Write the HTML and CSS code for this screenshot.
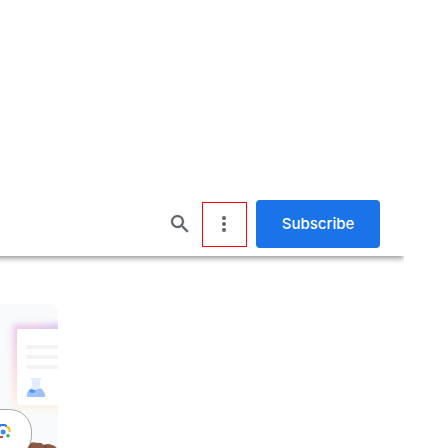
FILE: index.html
```html
<!DOCTYPE html>
<html lang="en">
<head>
<meta charset="utf-8">
<meta name="viewport" content="width=device-width, initial-scale=1">
<title>Subscribe</title>
<link rel="stylesheet" href="styles.css">
</head>
<body>
<header class="header">
  <nav class="actions">
    <button class="icon-button" type="button" aria-label="Search">
      <svg class="icon icon-search" viewBox="0 0 24 24"><path d="M15.5 14h-.79l-.28-.27A6.471 6.471 0 0 0 16 9.5 6.5 6.5 0 1 0 9.5 16c1.61 0 3.09-.59 4.23-1.57l.27.28v.79l5 4.99L20.49 19l-4.99-5zm-6 0C7.01 14 5 11.99 5 9.5S7.01 5 9.5 5 14 7.01 14 9.5 11.99 14 9.5 14z"/></svg>
    </button>
    <button class="icon-button icon-button-marked" type="button" aria-label="More">
      <svg class="icon" viewBox="0 0 24 24"><circle cx="12" cy="6" r="2"/><circle cx="12" cy="12" r="2"/><circle cx="12" cy="18" r="2"/></svg>
    </button>
    <button class="subscribe" type="button">Subscribe</button>
  </nav>
</header>
<main class="content">
  <svg class="hero" viewBox="0 0 58 144" aria-hidden="true">
    <defs>
      <linearGradient id="glow" x1="0" y1="0" x2="0" y2="1">
        <stop offset="0" stop-color="#ecc0ea"/>
        <stop offset=".35" stop-color="#f5cfe2"/>
        <stop offset=".7" stop-color="#fae2dd"/>
        <stop offset="1" stop-color="#faf2e0"/>
      </linearGradient>
      <linearGradient id="glow-top" x1="0" y1="0" x2="1" y2="0">
        <stop offset=".3" stop-color="#c9c2f6" stop-opacity="0"/>
        <stop offset="1" stop-color="#c9d0fa"/>
      </linearGradient>
      <filter id="soft" x="-30%" y="-50%" width="160%" height="200%"><feGaussianBlur stdDeviation="3"/></filter>
    </defs>
    <rect width="58" height="144" fill="#f8fafb"/>
    <rect x="13" y="21" width="60" height="83" rx="3" fill="url(#glow)" filter="url(#soft)"/>
    <rect x="20" y="21" width="46" height="12" fill="url(#glow-top)" filter="url(#soft)"/>
    <rect x="17" y="25" width="60" height="76" rx="2" fill="#fff"/>
    <g fill="#f3f4f5">
      <rect x="26" y="41" width="50" height="4" rx="2"/>
      <rect x="26" y="51" width="50" height="4" rx="2"/>
      <rect x="26" y="61" width="50" height="4" rx="2"/>
    </g>
    <path d="M31 74h10v2h-1v6l5 7q1 4-2 4h-14q-3 0-2-4l5-7v-6h-1z" fill="#e4edfd"/>
    <path d="M28.500 87q1-2 3.500-1 2 2 4 0 3-2 6-1l3 5q1 3-2 3h-14q-3 0-2-3z" fill="#9dc2fa"/>
    <path d="M29 86.500q2-2.500 4-1 1.500 1 3 .5-1 3-4 3-2 0-3-2.500" fill="#4c96f5"/>
    <path d="M22 146q2-5 7-6 3-3 8-1 4-1 7 2 4-2 8 0 4 1 6 5z" fill="#8a5a45"/>
    <path d="M30 144q1-2 0-3M44 141q2 1 2 3" fill="none" stroke="#59392d"/>
    <rect x="-60" y="105.500" width="91.500" height="48" rx="22" fill="#fff" stroke="#a5a7a9"/>
    <g fill="none" stroke-width="2">
      <path d="M-1 122h1l1-1h4l1 1h1" stroke="#3478ed"/>
      <path d="M6.500 123q3 0 3 3v2" stroke="#fabb15"/>
      <path d="M-1 133h4" stroke="#ea4335"/>
    </g>
    <circle cx="3.200" cy="128" r="2.500" fill="#4285f4"/>
    <circle cx="8" cy="131.800" r="1.700" fill="#34a853"/>
  </svg>
</main>
</body>
</html>
```
FILE: styles.css
```css
* {
  box-sizing: border-box;
}

body {
  margin: 0;
  overflow: hidden;
  background: #fff;
  font-family: Inter, Roboto, sans-serif;
}

.header {
  margin: 0 44px 0 -16px;
  padding: 200px 24px 8px 0;
  box-shadow: 0 2px 6px rgba(0, 0, 0, 0.45);
  clip-path: inset(0 0 -10px 0);
}

.actions {
  display: flex;
  justify-content: flex-end;
  align-items: center;
}

.icon-button {
  display: grid;
  place-items: center start;
  width: 44px;
  height: 45px;
  padding: 0 9px;
  border: 1px solid transparent;
  background: none;
}

.icon-button-marked {
  width: 45px;
  margin-right: 9px;
  border-color: #f00;
}

.icon {
  width: 24px;
  height: 24px;
  fill: #5f6368;
}

.icon-search {
  stroke: #5f6368;
  stroke-width: 0.3;
}

.subscribe {
  min-width: 124px;
  height: 48px;
  padding: 0 24px;
  border: 0;
  border-radius: 4px;
  background: #1a73e8;
  color: #fff;
  font: 500 15px/24px Inter, Roboto, sans-serif;
}

.content {
  padding-top: 48px;
}

.hero {
  display: block;
  width: 58px;
  height: 144px;
  border-radius: 0 8px 0 0;
}
```
